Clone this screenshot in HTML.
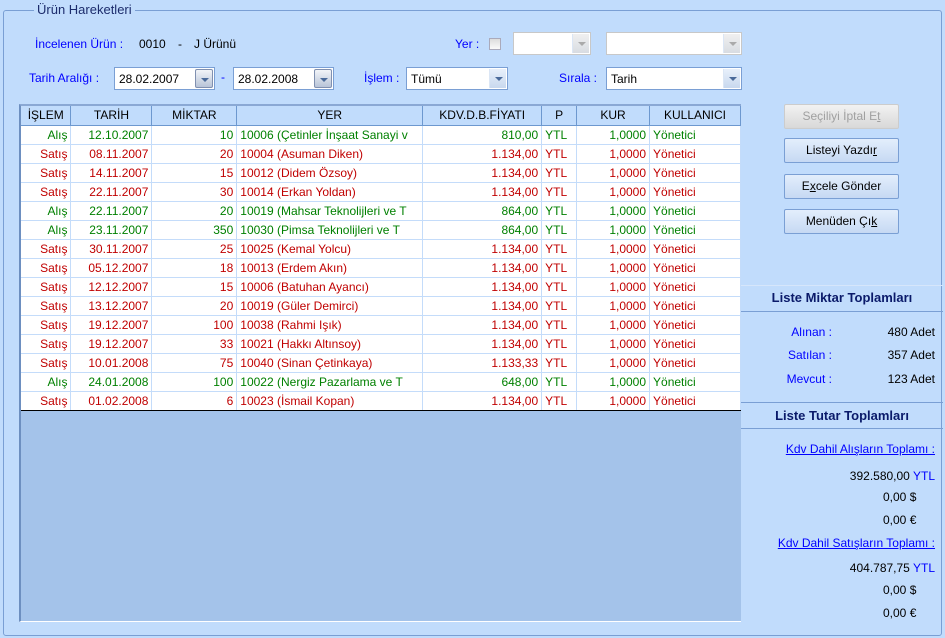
<!DOCTYPE html>
<html><head><meta charset="utf-8"><style>
*{margin:0;padding:0;box-sizing:border-box}
body{width:945px;height:638px;background:#c1dcfc;font-family:"Liberation Sans",sans-serif;font-size:12px;position:relative;overflow:hidden;color:#000}
.a{position:absolute;white-space:nowrap}
.lb{color:#0000ff}
.gb{position:absolute;left:3px;top:10px;width:939px;height:626px;border:1px solid #7a9fd4;border-radius:3px}
.combo{position:absolute;background:#fff;border:1px solid #7a9fd4;height:23px}
.combo .t{position:absolute;left:4px;top:4px}
.combo .b{position:absolute;right:1px;top:1px;width:17px;bottom:1px;background:linear-gradient(#e8f0fb,#c8d8ee);border-left:1px solid #dbe6f5}
.combo .b:after{content:"";position:absolute;left:5px;top:8px;border-left:4px solid transparent;border-right:4px solid transparent;border-top:4px solid #4a6a9a}
.dis{border-color:#c8c8c8}
.dis .b{background:linear-gradient(#f0f0f0,#d8dce2)}
.dis .b:after{border-top-color:#aaa}
.date .b{width:18px;background:linear-gradient(#f2f4f8,#b8c4d8);border:1px solid #8090b0;border-radius:2px}
.grid{position:absolute;left:19px;top:104px;width:722px;height:518px;background:#a4c3ea;border-left:2px solid #6d8fc0;border-top:2px solid #8aa8d4;border-bottom:1px solid #fff}
table{border-collapse:collapse;table-layout:fixed;position:absolute;left:0;top:0}
th{background:#c1dcfc;font-weight:normal;height:19px;border-right:1px solid #6d98cf;border-bottom:1px solid #6d98cf;padding:0}
td{background:#fff;height:19px;border-right:1px solid #c4dcfa;border-bottom:1px solid #c4dcfa;padding:0 3px;overflow:hidden;white-space:nowrap}
tr:last-child td{border-bottom:1px solid #000}
.g td{color:#008000}.r td{color:#c00000}
.rt{text-align:right}
.btn{position:absolute;left:784px;width:115px;height:25px;border:1px solid #7a9fd4;border-radius:2px;background:linear-gradient(#e3eefc,#c6d9f3);text-align:center;line-height:23px}
.hd{position:absolute;left:741px;width:202px;text-align:center;font-weight:bold;color:#0a1a6a;font-size:13px}
.ln{position:absolute;left:741px;width:202px;height:1px;background:#7a9fd4}
a{color:#0000ff;text-decoration:underline}
</style></head><body>
<div class="gb"></div>
<div class="a" style="left:34px;top:2px;background:#c1dcfc;padding:0 3px;color:#1c2c6c;font-size:13px">Ürün Hareketleri</div>

<div class="a lb" style="left:35px;top:37px">İncelenen Ürün :</div>
<div class="a" style="left:139px;top:37px">0010</div>
<div class="a" style="left:178px;top:37px">-</div>
<div class="a" style="left:194px;top:37px">J Ürünü</div>
<div class="a lb" style="left:455px;top:37px">Yer :</div>
<div class="a" style="left:489px;top:38px;width:12px;height:12px;border:1px solid #aab;background:linear-gradient(#ddd,#fafafa)"></div>
<div class="combo dis" style="left:513px;top:32px;width:78px"><div class="b"></div></div>
<div class="combo dis" style="left:606px;top:32px;width:136px"><div class="b"></div></div>

<div class="a lb" style="left:29px;top:71px">Tarih Aralığı :</div>
<div class="combo date" style="left:114px;top:67px;width:101px"><div class="t">28.02.2007</div><div class="b"></div></div>
<div class="a lb" style="left:221px;top:70px">-</div>
<div class="combo date" style="left:233px;top:67px;width:101px"><div class="t">28.02.2008</div><div class="b"></div></div>
<div class="a lb" style="left:364px;top:71px">İşlem :</div>
<div class="combo" style="left:406px;top:67px;width:102px"><div class="t">Tümü</div><div class="b"></div></div>
<div class="a lb" style="left:559px;top:71px">Sırala :</div>
<div class="combo" style="left:606px;top:67px;width:136px"><div class="t">Tarih</div><div class="b"></div></div>

<div class="grid"><table>
<colgroup><col style="width:50px"><col style="width:81px"><col style="width:85px"><col style="width:186px"><col style="width:119px"><col style="width:35px"><col style="width:73px"><col style="width:91px"></colgroup>
<tr><th>İŞLEM</th><th>TARİH</th><th>MİKTAR</th><th>YER</th><th>KDV.D.B.FİYATI</th><th>P</th><th>KUR</th><th>KULLANICI</th></tr>
<tr class="g"><td class="rt">Alış</td><td class="rt">12.10.2007</td><td class="rt">10</td><td>10006 (Çetinler İnşaat Sanayi v</td><td class="rt">810,00</td><td>YTL</td><td class="rt">1,0000</td><td>Yönetici</td></tr>
<tr class="r"><td class="rt">Satış</td><td class="rt">08.11.2007</td><td class="rt">20</td><td>10004 (Asuman Diken)</td><td class="rt">1.134,00</td><td>YTL</td><td class="rt">1,0000</td><td>Yönetici</td></tr>
<tr class="r"><td class="rt">Satış</td><td class="rt">14.11.2007</td><td class="rt">15</td><td>10012 (Didem Özsoy)</td><td class="rt">1.134,00</td><td>YTL</td><td class="rt">1,0000</td><td>Yönetici</td></tr>
<tr class="r"><td class="rt">Satış</td><td class="rt">22.11.2007</td><td class="rt">30</td><td>10014 (Erkan Yoldan)</td><td class="rt">1.134,00</td><td>YTL</td><td class="rt">1,0000</td><td>Yönetici</td></tr>
<tr class="g"><td class="rt">Alış</td><td class="rt">22.11.2007</td><td class="rt">20</td><td>10019 (Mahsar Teknolijleri ve T</td><td class="rt">864,00</td><td>YTL</td><td class="rt">1,0000</td><td>Yönetici</td></tr>
<tr class="g"><td class="rt">Alış</td><td class="rt">23.11.2007</td><td class="rt">350</td><td>10030 (Pimsa Teknolijleri ve T</td><td class="rt">864,00</td><td>YTL</td><td class="rt">1,0000</td><td>Yönetici</td></tr>
<tr class="r"><td class="rt">Satış</td><td class="rt">30.11.2007</td><td class="rt">25</td><td>10025 (Kemal Yolcu)</td><td class="rt">1.134,00</td><td>YTL</td><td class="rt">1,0000</td><td>Yönetici</td></tr>
<tr class="r"><td class="rt">Satış</td><td class="rt">05.12.2007</td><td class="rt">18</td><td>10013 (Erdem Akın)</td><td class="rt">1.134,00</td><td>YTL</td><td class="rt">1,0000</td><td>Yönetici</td></tr>
<tr class="r"><td class="rt">Satış</td><td class="rt">12.12.2007</td><td class="rt">15</td><td>10006 (Batuhan Ayancı)</td><td class="rt">1.134,00</td><td>YTL</td><td class="rt">1,0000</td><td>Yönetici</td></tr>
<tr class="r"><td class="rt">Satış</td><td class="rt">13.12.2007</td><td class="rt">20</td><td>10019 (Güler Demirci)</td><td class="rt">1.134,00</td><td>YTL</td><td class="rt">1,0000</td><td>Yönetici</td></tr>
<tr class="r"><td class="rt">Satış</td><td class="rt">19.12.2007</td><td class="rt">100</td><td>10038 (Rahmi Işık)</td><td class="rt">1.134,00</td><td>YTL</td><td class="rt">1,0000</td><td>Yönetici</td></tr>
<tr class="r"><td class="rt">Satış</td><td class="rt">19.12.2007</td><td class="rt">33</td><td>10021 (Hakkı Altınsoy)</td><td class="rt">1.134,00</td><td>YTL</td><td class="rt">1,0000</td><td>Yönetici</td></tr>
<tr class="r"><td class="rt">Satış</td><td class="rt">10.01.2008</td><td class="rt">75</td><td>10040 (Sinan Çetinkaya)</td><td class="rt">1.133,33</td><td>YTL</td><td class="rt">1,0000</td><td>Yönetici</td></tr>
<tr class="g"><td class="rt">Alış</td><td class="rt">24.01.2008</td><td class="rt">100</td><td>10022 (Nergiz Pazarlama ve T</td><td class="rt">648,00</td><td>YTL</td><td class="rt">1,0000</td><td>Yönetici</td></tr>
<tr class="r"><td class="rt">Satış</td><td class="rt">01.02.2008</td><td class="rt">6</td><td>10023 (İsmail Kopan)</td><td class="rt">1.134,00</td><td>YTL</td><td class="rt">1,0000</td><td>Yönetici</td></tr>
</table></div>

<div class="btn" style="top:104px;color:#a0a0a0;background:linear-gradient(#f2f2f2,#d8d8d8);border-color:#ccc">Seçiliyi İptal E<u>t</u></div>
<div class="btn" style="top:138px">Listeyi Yazdı<u>r</u></div>
<div class="btn" style="top:174px">E<u>x</u>cele Gönder</div>
<div class="btn" style="top:209px">Menüden Çı<u>k</u></div>

<div class="ln" style="top:285px;background:#d6e6fb"></div>
<div class="hd" style="top:290px">Liste Miktar Toplamları</div>
<div class="ln" style="top:311px"></div>
<div class="a lb" style="right:113px;top:325px">Alınan :</div><div class="a" style="right:10px;top:325px">480 Adet</div>
<div class="a lb" style="right:113px;top:348px">Satılan :</div><div class="a" style="right:10px;top:348px">357 Adet</div>
<div class="a lb" style="right:113px;top:372px">Mevcut :</div><div class="a" style="right:10px;top:372px">123 Adet</div>
<div class="ln" style="top:402px"></div>
<div class="hd" style="top:408px">Liste Tutar Toplamları</div>
<div class="ln" style="top:428px"></div>
<div class="a" style="right:10px;top:442px"><a>Kdv Dahil Alışların Toplamı :</a></div>
<div class="a" style="right:10px;top:469px">392.580,00 <span class="lb">YTL</span></div>
<div class="a" style="left:883px;top:490px">0,00 $</div>
<div class="a" style="left:883px;top:513px">0,00 €</div>
<div class="a" style="right:10px;top:536px"><a>Kdv Dahil Satışların Toplamı :</a></div>
<div class="a" style="right:10px;top:561px">404.787,75 <span class="lb">YTL</span></div>
<div class="a" style="left:883px;top:583px">0,00 $</div>
<div class="a" style="left:883px;top:606px">0,00 €</div>
</body></html>
